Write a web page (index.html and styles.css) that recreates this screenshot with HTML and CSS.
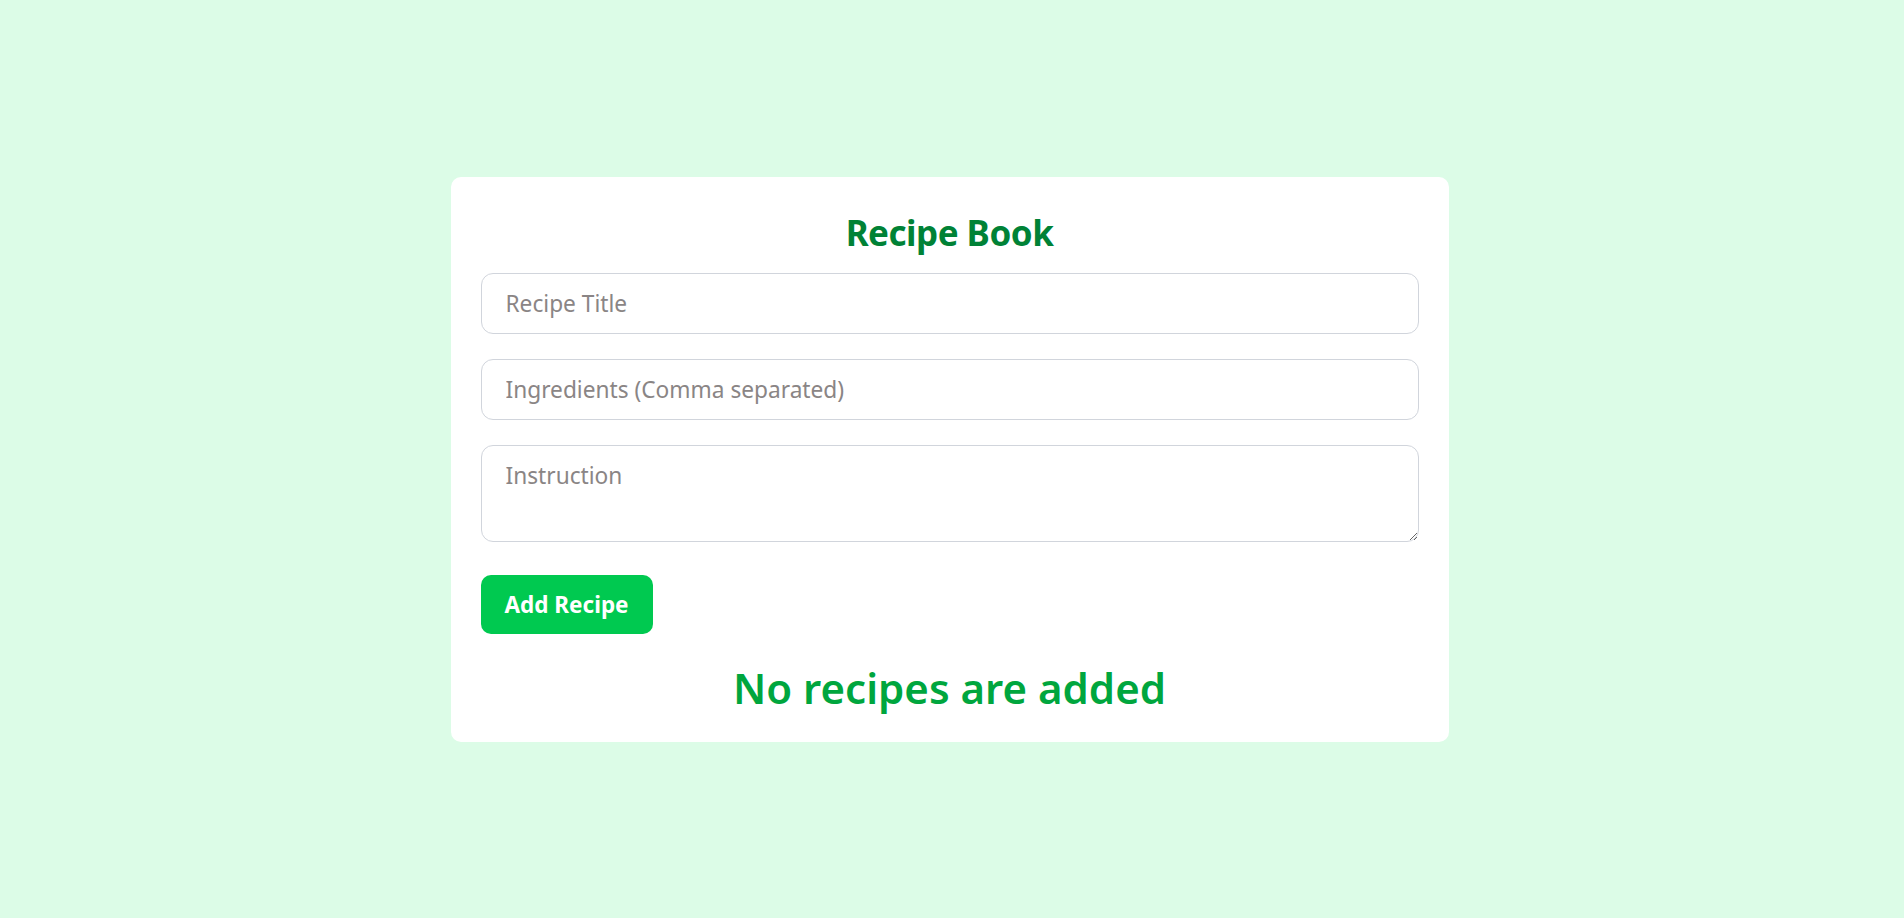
FILE: index.html
```html
<!DOCTYPE html>
<html lang="en">
<head>
<meta charset="utf-8">
<title>Recipe Book</title>
<link rel="stylesheet" href="styles.css">
</head>
<body>
<main class="page">
  <section class="card">
    <h1 class="title">Recipe Book</h1>
    <form class="form" onsubmit="return false">
      <input class="field" type="text" placeholder="Recipe Title">
      <input class="field" type="text" placeholder="Ingredients (Comma separated)">
      <textarea class="field area" placeholder="Instruction"></textarea>
      <button class="btn" type="submit">Add Recipe</button>
    </form>
    <p class="empty">No recipes are added</p>
  </section>
</main>
</body>
</html>
```
FILE: styles.css
```css
* { box-sizing: border-box; }
html, body { margin: 0; padding: 0; }
body {
  background: #dcfce7;
  font-family: "Noto Sans", "Open Sans", sans-serif;
}
.page {
  min-height: 100vh;
  display: flex;
  align-items: center;
  justify-content: center;
}
.card {
  width: 998px;
  margin-right: 5px;
  background: #ffffff;
  border-radius: 10px;
  padding: 34px 30px 28px;
  display: flex;
  flex-direction: column;
}
.title {
  margin: 0 0 18px;
  text-align: center;
  color: #008236;
  font-size: 35px;
  letter-spacing: -0.5px;
  line-height: 44px;
  font-weight: 700;
}
.form {
  display: flex;
  flex-direction: column;
}
.field {
  display: block;
  width: 100%;
  height: 61px;
  margin: 0 0 25px;
  padding: 12px 20px 12px 24px;
  border: 1px solid #d1d5dc;
  border-radius: 12px;
  font-family: inherit;
  font-size: 22.7px;
  line-height: 35px;
  color: #1f2937;
  background: #fff;
  outline: none;
}
.field::placeholder { color: #8a8585; }
.area {
  height: 97px;
  margin-bottom: 33px;
  resize: both;
}
.btn {
  align-self: flex-start;
  height: 59px;
  padding: 0 24px;
  border: none;
  border-radius: 10px;
  background: #00c950;
  color: #ffffff;
  font-family: inherit;
  font-size: 22.5px;
  font-weight: 700;
  cursor: pointer;
}
.empty {
  margin: 28px 0 0;
  text-align: center;
  color: #00a63e;
  font-size: 42px;
  line-height: 52px;
  font-weight: 600;
}
```
